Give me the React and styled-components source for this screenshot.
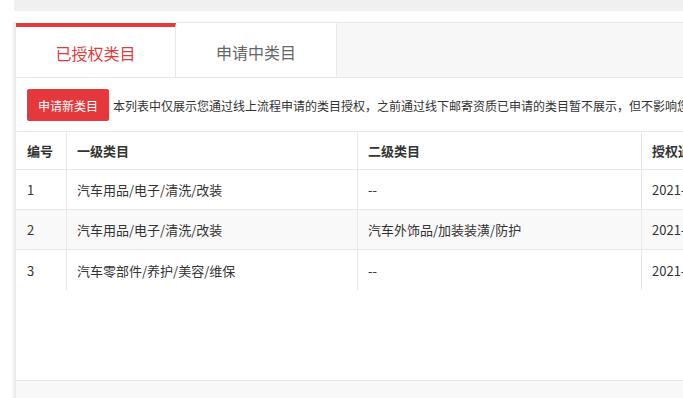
import React from "react";
import styled, { createGlobalStyle } from "styled-components";

const Global = createGlobalStyle`
  html, body { margin: 0; padding: 0; background: #fff; overflow: hidden; }
  body { font-family: "Noto Sans CJK SC", "Noto Sans", sans-serif; color: #333; }
  * { box-sizing: border-box; }
`;

const Page = styled.div`
  padding-left: 14px;
  width: 1200px;
`;

const TopBar = styled.div`
  height: 11px;
  background: #f0f0f0;
  margin-bottom: 11px;
`;

const Card = styled.div`
  border-left: 2px solid #ebebeb;
  box-shadow: -2px 0 2px rgba(0, 0, 0, 0.04);
`;

const TabBar = styled.div`
  display: flex;
  height: 56px;
  border-bottom: 1px solid #e8e8e8;
  background: #fff;
`;

const Tab = styled.div`
  width: ${(p) => (p.$active ? "160px" : "161px")};
  display: flex;
  align-items: center;
  justify-content: center;
  font-size: 16px;
  background: #fff;
  color: ${(p) => (p.$active ? "#e4393c" : "#666")};
  border-top: ${(p) => (p.$active ? "4px solid #e4393c" : "1px solid #e8e8e8")};
  margin-top: ${(p) => (p.$active ? "1px" : "0")};
  border-right: 1px solid #e8e8e8;
  padding-top: ${(p) => (p.$active ? "1px" : "4px")};
`;

const TabFill = styled.div`
  flex: 1;
  background: #f7f7f7;
  border-top: 1px solid #e8e8e8;
`;

const Body = styled.div`
  height: 302px;
  padding-top: 11px;
  background: #fff;
`;

const Toolbar = styled.div`
  display: flex;
  align-items: center;
  gap: 4px;
  padding-left: 11px;
  margin-bottom: 10px;
  white-space: nowrap;
`;

const Button = styled.button`
  height: 32px;
  padding: 0 11px;
  border: none;
  border-radius: 2px;
  background: #e4393c;
  color: #fff;
  font-family: inherit;
  font-size: 12px;
  cursor: pointer;
`;

const Note = styled.span`
  font-size: 12px;
  color: #333;
`;

const Table = styled.div`
  display: grid;
  grid-template-columns: 51px 291px 284px 400px;
  border-top: 1px solid #e8e8e8;
  font-size: 13px;
`;

const Row = styled.div`
  display: contents;
`;

const Cell = styled.div`
  height: ${(p) => (p.$head ? "38px" : "40px")};
  display: flex;
  align-items: center;
  padding-left: ${(p) => (p.$first ? "11px" : "10px")};
  border-right: 1px solid #e8e8e8;
  border-bottom: ${(p) => (p.$last ? "none" : "1px solid #e8e8e8")};
  background: ${(p) => (p.$alt ? "#f9f9f9" : "#fff")};
  font-weight: ${(p) => (p.$head ? 700 : 400)};
  color: #333;
  white-space: nowrap;
  overflow: hidden;
`;

const Footer = styled.div`
  height: 40px;
  background: #f8f8f8;
  border-top: 1px solid #e8e8e8;
`;

const rows = [
  ["1", "汽车用品/电子/清洗/改装", "--", "2021-03-12 10:21:35"],
  ["2", "汽车用品/电子/清洗/改装", "汽车外饰品/加装装潢/防护", "2021-03-12 10:21:35"],
  ["3", "汽车零部件/养护/美容/维保", "--", "2021-03-12 10:21:35"],
];

export default function App() {
  return (
    <>
      <Global />
      <Page>
        <TopBar />
        <Card>
          <TabBar>
            <Tab $active>已授权类目</Tab>
            <Tab>申请中类目</Tab>
            <TabFill />
          </TabBar>
          <Body>
            <Toolbar>
              <Button>申请新类目</Button>
              <Note>
                本列表中仅展示您通过线上流程申请的类目授权，之前通过线下邮寄资质已申请的类目暂不展示，但不影响您的正常经营。
              </Note>
            </Toolbar>
            <Table>
              <Row>
                <Cell $head $first>编号</Cell>
                <Cell $head>一级类目</Cell>
                <Cell $head>二级类目</Cell>
                <Cell $head>授权通过时间</Cell>
              </Row>
              {rows.map((r, i) => (
                <Row key={r[0]}>
                  {r.map((c, j) => (
                    <Cell key={j} $first={j === 0} $alt={i === 1} $last={i === rows.length - 1}>
                      {c}
                    </Cell>
                  ))}
                </Row>
              ))}
            </Table>
          </Body>
          <Footer />
        </Card>
      </Page>
    </>
  );
}
